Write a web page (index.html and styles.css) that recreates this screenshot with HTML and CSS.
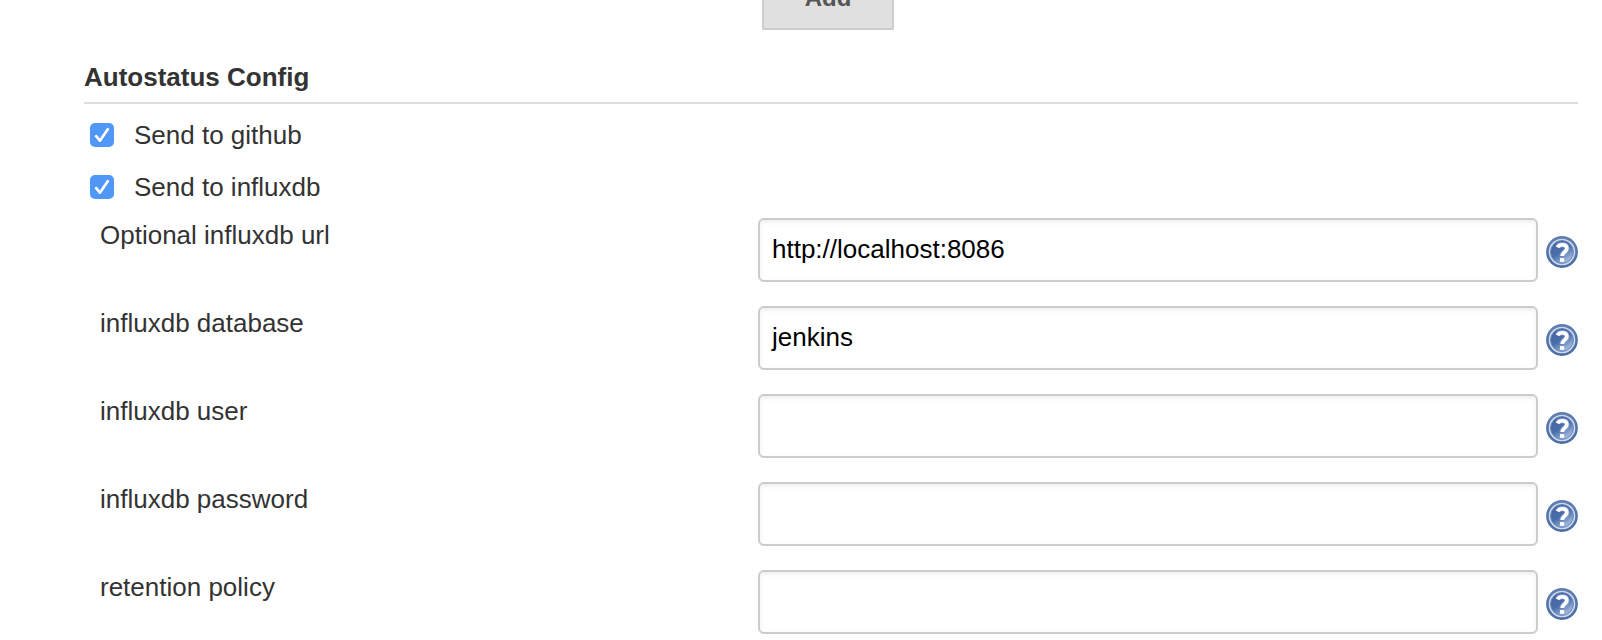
FILE: index.html
```html
<!DOCTYPE html>
<html lang="en">
<head>
<meta charset="utf-8">
<title>Autostatus Config</title>
<link rel="stylesheet" href="styles.css">
</head>
<body>
<svg class="defs" width="0" height="0">
  <defs>
    <linearGradient id="disc" x1="0.25" y1="0.1" x2="0.8" y2="0.95">
      <stop offset="0" stop-color="#4568a5"/>
      <stop offset="0.45" stop-color="#4a6eab"/>
      <stop offset="1" stop-color="#b0c6e6"/>
    </linearGradient>
    <linearGradient id="rim" x1="0" y1="0" x2="0" y2="1">
      <stop offset="0" stop-color="#5f7fb3"/>
      <stop offset="1" stop-color="#4a6ca4"/>
    </linearGradient>
    <symbol id="help" viewBox="0 0 32 32">
      <circle cx="16" cy="16" r="14.6" fill="#ccd8ea" stroke="url(#rim)" stroke-width="2.6"/>
      <circle cx="16" cy="16" r="11.4" fill="url(#disc)" stroke="#6583b5" stroke-width="1"/>
      <path d="M11.6 11.4C12.4 9.4 14 8.7 16.2 8.7c2.9 0 4.7 1.4 4.7 3.9 0 3.3-4.7 3.3-4.7 7.4" fill="none" stroke="#c6d3e8" stroke-opacity=".6" stroke-width="5"/>
      <path d="M11.6 11.4C12.4 9.4 14 8.7 16.2 8.7c2.9 0 4.7 1.4 4.7 3.9 0 3.3-4.7 3.3-4.7 7.4" fill="none" stroke="#fff" stroke-width="3.4"/>
      <rect x="14" y="22" width="4.2" height="3.8" rx=".6" fill="#fff"/>
    </symbol>
    <symbol id="check" viewBox="0 0 24 24">
      <path d="M6.2 13.4l3.8 4.4L17.6 6.9" transform="translate(0 1)" fill="none" stroke="#2f70d6" stroke-opacity=".45" stroke-width="2.6" stroke-linecap="round" stroke-linejoin="round"/>
      <path d="M6.1 13.2l3.9 4.6L17.8 6.3" fill="none" stroke="#fff" stroke-width="2.8" stroke-linecap="round" stroke-linejoin="round"/>
    </symbol>
  </defs>
</svg>
<main class="page">
  <button class="add" type="button">Add</button>
  <h2 class="heading">Autostatus Config</h2>
  <div class="checks">
    <div class="check-row"><svg class="box"><use href="#check"/></svg><span>Send to github</span></div>
    <div class="check-row"><svg class="box"><use href="#check"/></svg><span>Send to influxdb</span></div>
  </div>
  <div class="fields">
    <div class="field"><span class="label">Optional influxdb url</span><div class="input">http://localhost:8086</div><svg class="help"><use href="#help"/></svg></div>
    <div class="field"><span class="label">influxdb database</span><div class="input">jenkins</div><svg class="help"><use href="#help"/></svg></div>
    <div class="field"><span class="label">influxdb user</span><div class="input"></div><svg class="help"><use href="#help"/></svg></div>
    <div class="field"><span class="label">influxdb password</span><div class="input"></div><svg class="help"><use href="#help"/></svg></div>
    <div class="field"><span class="label">retention policy</span><div class="input"></div><svg class="help"><use href="#help"/></svg></div>
  </div>
</main>
</body>
</html>
```
FILE: styles.css
```css
* { box-sizing: border-box; }
body {
  margin: 0;
  background: #fff;
  color: #333;
  font: 26px/30px "Liberation Sans", Arial, sans-serif;
  overflow: hidden;
}
.defs { display: block; }
.page {
  display: flex;
  flex-direction: column;
  height: 640px;
  padding: 0 24px 0 84px;
  overflow: hidden;
}
.add {
  flex: none;
  width: 132px;
  height: 64px;
  margin: -34px 0 0 678px;
  padding: 0;
  border: 2px solid #ccc;
  border-radius: 2px;
  background: #e0e0e0;
  color: #555;
  font: bold 24px/28px "Liberation Sans", Arial, sans-serif;
}
.heading {
  margin: 32px 0 0;
  padding-bottom: 10px;
  border-bottom: 2px solid #ddd;
  font-size: 26px;
  line-height: 30px;
}
.checks {
  display: flex;
  flex-direction: column;
  gap: 22px;
  padding: 16px 0 0 6px;
}
.check-row {
  display: flex;
  align-items: center;
  gap: 20px;
  height: 30px;
}
.box {
  width: 24px;
  height: 24px;
  border-radius: 5px;
  background: #5098f8;
}
.fields {
  display: grid;
  gap: 24px;
  padding-top: 16px;
}
.field {
  display: grid;
  grid-template-columns: 658px 780px 32px;
  column-gap: 8px;
  height: 64px;
  padding-left: 16px;
  margin-left: -8px;
}
.label { padding: 2px 0 0 8px; }
.input {
  padding: 14px 12px;
  border: 2px solid #ccc;
  border-radius: 6px;
  box-shadow: inset 0 2px 4px rgba(0, 0, 0, .075);
  color: #000;
}
.help {
  width: 32px;
  height: 32px;
  margin-top: 18px;
}
```
